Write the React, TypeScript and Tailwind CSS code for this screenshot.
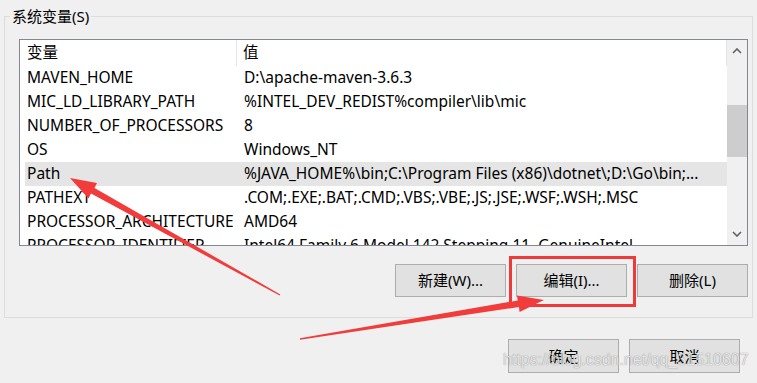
import React from "react";

type Row = { name: string; value: string };

const rows: Row[] = [
  { name: "MAVEN_HOME", value: "D:\\apache-maven-3.6.3" },
  { name: "MIC_LD_LIBRARY_PATH", value: "%INTEL_DEV_REDIST%compiler\\lib\\mic" },
  { name: "NUMBER_OF_PROCESSORS", value: "8" },
  { name: "OS", value: "Windows_NT" },
  { name: "Path", value: "%JAVA_HOME%\\bin;C:\\Program Files (x86)\\dotnet\\;D:\\Go\\bin;..." },
  { name: "PATHEXT", value: ".COM;.EXE;.BAT;.CMD;.VBS;.VBE;.JS;.JSE;.WSF;.WSH;.MSC" },
  { name: "PROCESSOR_ARCHITECTURE", value: "AMD64" },
  { name: "PROCESSOR_IDENTIFIER", value: "Intel64 Family 6 Model 142 Stepping 11, GenuineIntel" },
];

const WinButton: React.FC<{ label: string; h?: string }> = ({ label, h = "h-[33px]" }) => (
  <button
    className={`w-[111px] ${h} bg-[#e1e1e1] border border-[#adadad] text-[15px] text-black flex items-center justify-center`}
  >
    {label}
  </button>
);

const ScrollBar = () => (
  <div className="w-[20px] h-full bg-[#f0f0f0] flex flex-col">
    <div className="h-[22px] flex items-center justify-center">
      <svg width="10" height="6" viewBox="0 0 10 6">
        <path d="M1 5 L5 1 L9 5" stroke="#606060" strokeWidth="1.6" fill="none" />
      </svg>
    </div>
    <div className="h-[43px]" />
    <div className="h-[52px] bg-[#cdcdcd]" />
    <div className="flex-1" />
    <div className="h-[22px] flex items-center justify-center">
      <svg width="10" height="6" viewBox="0 0 10 6">
        <path d="M1 1 L5 5 L9 1" stroke="#606060" strokeWidth="1.6" fill="none" />
      </svg>
    </div>
  </div>
);

const ListView = () => (
  <div className="ml-[14px] mt-[22px] w-[729px] h-[207px] border border-[#828790] bg-white flex overflow-hidden text-[15.5px]">
    <div className="flex-1 flex flex-col overflow-hidden">
      <div className="h-[26px] flex items-center shrink-0">
        <div className="w-[217px] h-full flex items-center pl-[7px] border-r border-[#e5e5e5]">变量</div>
        <div className="flex-1 h-full flex items-center pl-[6px] border-r border-[#e5e5e5]">值</div>
      </div>
      {rows.map((r) => (
        <div
          key={r.name}
          className={`h-[24px] shrink-0 ml-[5px] flex items-center whitespace-nowrap ${
            r.name === "Path" ? "bg-[#e5e5e5]" : ""
          }`}
        >
          <div className="w-[212px] pl-[2px] overflow-hidden">{r.name}</div>
          <div className="pl-[7px]">{r.value}</div>
        </div>
      ))}
    </div>
    <ScrollBar />
  </div>
);

export default function App() {
  return (
    <div className="relative w-[757px] h-[383px] overflow-hidden bg-[#f0f0f0] text-[15px] text-black font-['Noto_Sans','Noto_Sans_CJK_SC',sans-serif]">
      <div className="relative ml-[4px] mt-[16px] w-[749px] h-[302px] border border-[#dcdcdc]">
        <span className="absolute left-[5px] top-[-11px] px-[2px] leading-[20px] bg-[#f0f0f0]">系统变量(S)</span>
        <ListView />
        <div className="ml-[14px] mt-[18px] w-[729px] flex justify-end gap-[10px]">
          <WinButton label="新建(W)..." />
          <WinButton label="编辑(I)..." />
          <WinButton label="删除(L)" />
        </div>
      </div>

      <div className="mt-[21px] pr-[17px] flex justify-end gap-[10px]">
        <WinButton label="确定" h="h-[34px]" />
        <WinButton label="取消" h="h-[34px]" />
      </div>

      {/* red markup drawn over the dialog */}
      <div className="absolute left-[509px] top-[256px] w-[127px] h-[51px] border-[3px] border-[#f03a3a]" />
      <svg className="absolute inset-0 pointer-events-none" width="757" height="383" viewBox="0 0 757 383">
        <polygon
          points="70,178 97,183 94.5,188 280.3,294.4 279.7,295.6 91,193.6 88.5,198.5"
          fill="#f23b3b"
        />
        <polygon
          points="544,300 519.6,312 518.9,307 300.1,339.8 299.9,338.2 517.7,300.5 517,295.5"
          fill="#f23b3b"
        />
      </svg>

      <span className="absolute left-[503px] top-[350px] text-[16px] leading-[20px] font-['Liberation_Sans',sans-serif] text-white/80 [text-shadow:0_0_1px_rgba(0,0,0,0.55)] whitespace-nowrap">
        https://blog.csdn.net/qq_31510607
      </span>
    </div>
  );
}
